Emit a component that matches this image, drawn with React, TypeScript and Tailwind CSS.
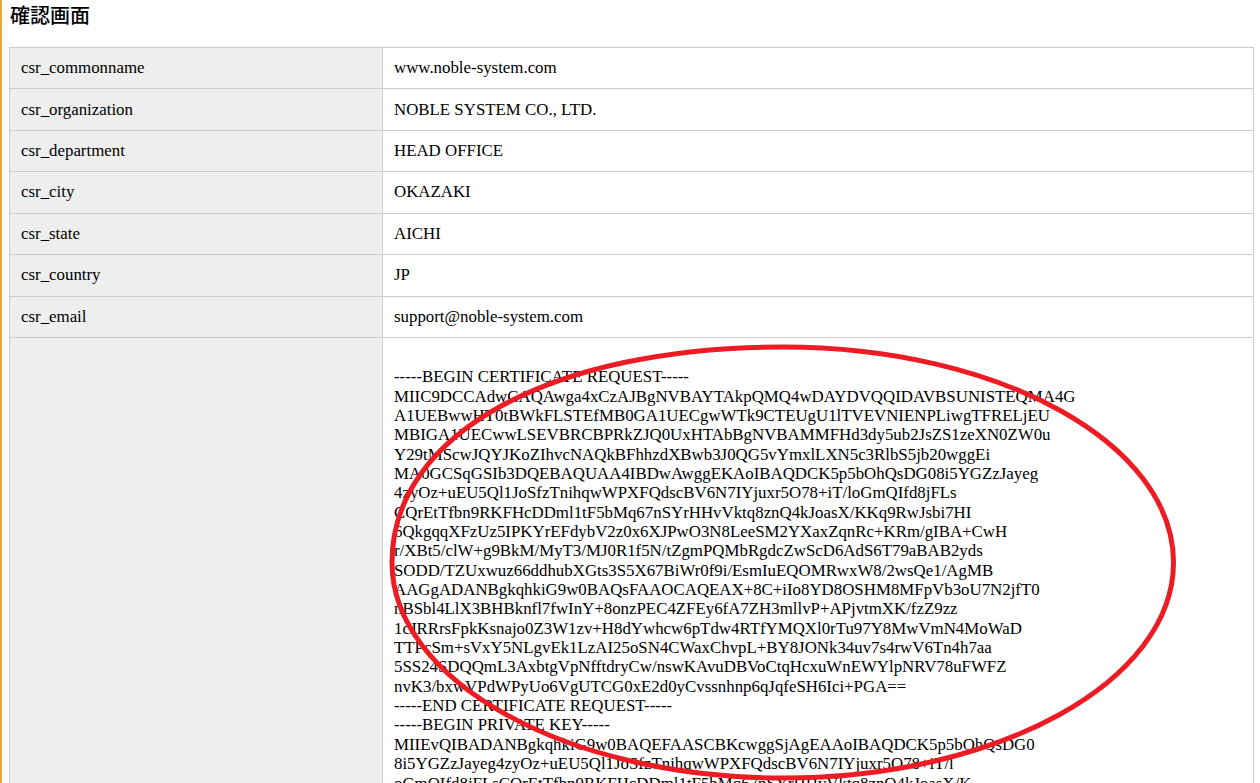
const rows = [
  ["csr_commonname", "www.noble-system.com"],
  ["csr_organization", "NOBLE SYSTEM CO., LTD."],
  ["csr_department", "HEAD OFFICE"],
  ["csr_city", "OKAZAKI"],
  ["csr_state", "AICHI"],
  ["csr_country", "JP"],
  ["csr_email", "support@noble-system.com"],
];

const pem = `
-----BEGIN CERTIFICATE REQUEST-----
MIIC9DCCAdwCAQAwga4xCzAJBgNVBAYTAkpQMQ4wDAYDVQQIDAVBSUNISTEQMA4G
A1UEBwwHT0tBWkFLSTEfMB0GA1UECgwWTk9CTEUgU1lTVEVNIENPLiwgTFRELjEU
MBIGA1UECwwLSEVBRCBPRkZJQ0UxHTAbBgNVBAMMFHd3dy5ub2JsZS1zeXN0ZW0u
Y29tMScwJQYJKoZIhvcNAQkBFhhzdXBwb3J0QG5vYmxlLXN5c3RlbS5jb20wggEi
MA0GCSqGSIb3DQEBAQUAA4IBDwAwggEKAoIBAQDCK5p5bOhQsDG08i5YGZzJayeg
4zyOz+uEU5Ql1JoSfzTnihqwWPXFQdscBV6N7IYjuxr5O78+iT/loGmQIfd8jFLs
CQrEtTfbn9RKFHcDDml1tF5bMq67nSYrHHvVktq8znQ4kJoasX/KKq9RwJsbi7HI
6QkgqqXFzUz5IPKYrEFdybV2z0x6XJPwO3N8LeeSM2YXaxZqnRc+KRm/gIBA+CwH
r/XBt5/clW+g9BkM/MyT3/MJ0R1f5N/tZgmPQMbRgdcZwScD6AdS6T79aBAB2yds
SODD/TZUxwuz66ddhubXGts3S5X67BiWr0f9i/EsmIuEQOMRwxW8/2wsQe1/AgMB
AAGgADANBgkqhkiG9w0BAQsFAAOCAQEAX+8C+iIo8YD8OSHM8MFpVb3oU7N2jfT0
nBSbl4LlX3BHBknfl7fwInY+8onzPEC4ZFEy6fA7ZH3mllvP+APjvtmXK/fzZ9zz
1cJRRrsFpkKsnajo0Z3W1zv+H8dYwhcw6pTdw4RTfYMQXl0rTu97Y8MwVmN4MoWaD
TTPcSm+sVxY5NLgvEk1LzAI25oSN4CWaxChvpL+BY8JONk34uv7s4rwV6Tn4h7aa
5SS24SDQQmL3AxbtgVpNfftdryCw/nswKAvuDBVoCtqHcxuWnEWYlpNRV78uFWFZ
nvK3/bxwVPdWPyUo6VgUTCG0xE2d0yCvssnhnp6qJqfeSH6Ici+PGA==
-----END CERTIFICATE REQUEST-----
-----BEGIN PRIVATE KEY-----
MIIEvQIBADANBgkqhkiG9w0BAQEFAASCBKcwggSjAgEAAoIBAQDCK5p5bOhQsDG0
8i5YGZzJayeg4zyOz+uEU5Ql1JoSfzTnihqwWPXFQdscBV6N7IYjuxr5O78+iT/l
oGmQIfd8jFLsCQrEtTfbn9RKFHcDDml1tF5bMq67nSYrHHvVktq8znQ4kJoasX/K`;

export default function App() {
  return (
    <div className="relative h-[783px] overflow-hidden bg-white border-l-2 border-[#e3a73f] pl-[7px] pr-[6px] font-['Liberation_Serif',serif] text-[16.85px] leading-[19.4px] text-black">
      <h1 className="h-[47px] pt-[2px] pl-px font-['Noto_Sans_CJK_JP',sans-serif] text-[20px] leading-[26px] font-medium">確認画面</h1>

      {/* Confirmation rows */}
      <div className="grid grid-cols-[373px_1fr] border-t border-l border-[#ccc]">
        {rows.map(([label, value]) => (
          <div key={label} className="contents">
            <div className="h-[41.43px] border-r border-b border-[#ccc] bg-[#eee] pl-[11px] pt-[10.2px]">{label}</div>
            <div className="h-[41.43px] border-r border-b border-[#ccc] pl-[11px] pt-[10.2px]">{value}</div>
          </div>
        ))}
        <div className="h-[500px] border-r border-[#ccc] bg-[#eee]" />
        <div className="h-[500px] border-r border-[#ccc] pl-[11px] pt-[10px] leading-[19.35px] whitespace-pre-line">{pem}</div>
      </div>

      {/* Hand-drawn highlight over the key text */}
      <svg className="absolute left-0 top-0 pointer-events-none" width="1260" height="783" viewBox="0 0 1260 783" fill="none">
        <path
          d="M781 347C997 347 1171.5 443 1171.5 562.5C1171.5 681 997 778 781 778C565 778 390 681 390 562.5C390 432 552 347 781 347Z"
          stroke="#ed1c24"
          strokeWidth="5"
        />
      </svg>
    </div>
  );
}
